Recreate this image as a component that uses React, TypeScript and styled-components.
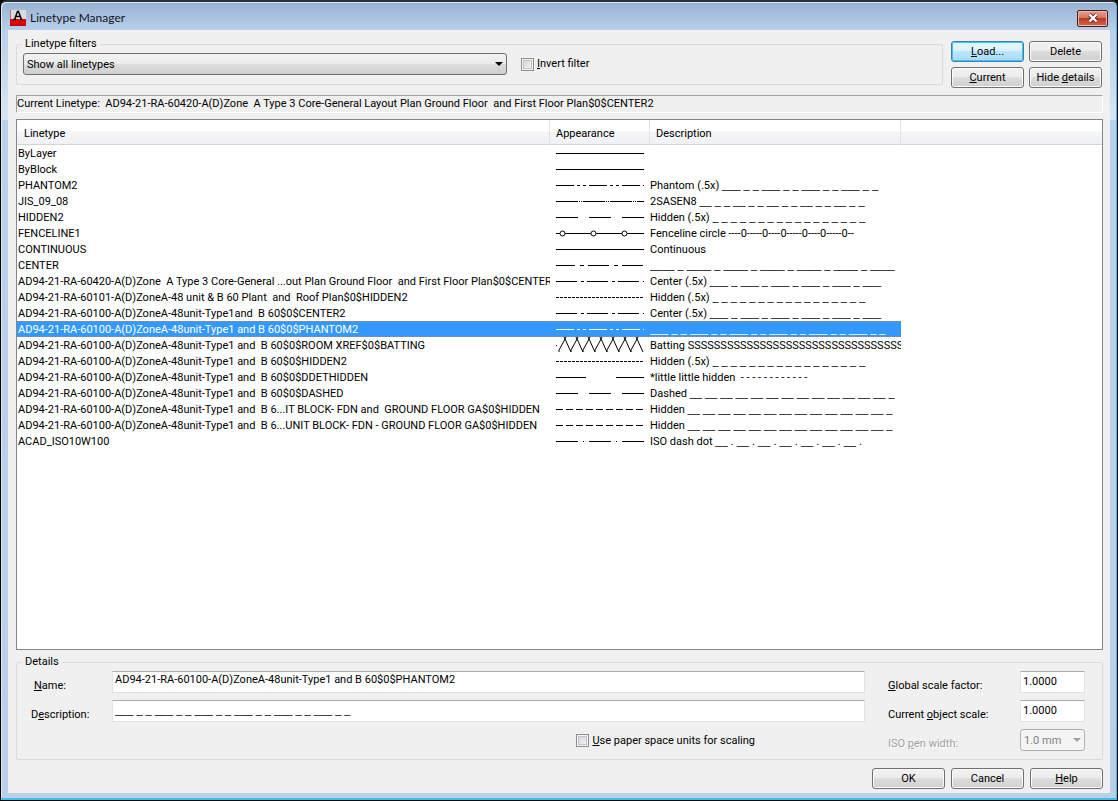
import React from 'react';
import styled, { createGlobalStyle, css } from 'styled-components';

const GlobalStyle = createGlobalStyle`
  * { box-sizing: border-box; }
  body { margin: 0; background: #000; }
  body, button, input, select, table {
    font-family: Roboto, "Liberation Sans", Arial, sans-serif;
    font-size: 11px;
    line-height: 16px;
    color: #000;
  }
`;

const Window = styled.main`
  display: flex;
  flex-direction: column;
  min-height: 100vh;
  padding: 0 6px 7px;
  border: 1px solid #000;
  border-top: 2px solid #2b2f38;
  border-radius: 6px 6px 0 0;
  box-shadow: inset -1px -2px 0 #35c3e8, inset 1px 1px 0 #dfeaf7;
  background: linear-gradient(#98b3d3 0, #b8cfe9 28px, #d9e5f5 118px, #b9d1ea 118px, #bccfe8 100%);
`;

const TitleBar = styled.header`
  display: flex;
  align-items: center;
  height: 28px;
  padding: 4px 3px 0;
`;

const Title = styled.h1`
  flex: 1;
  margin: 0 0 0 4px;
  font: 12px/16px Lato, "Open Sans", sans-serif;
  color: #10151d;
`;

const CloseButton = styled.button`
  display: flex;
  align-items: center;
  justify-content: center;
  width: 31px;
  height: 17px;
  padding: 0;
  border: 1px solid #4c1a1d;
  border-radius: 2px;
  box-shadow: inset 0 0 0 1px #eab5ab;
  background: linear-gradient(#e8a193 0, #d4705f 50%, #bb3922 50%, #d06a50 100%);
`;

const Client = styled.div`
  display: flex;
  flex: 1;
  flex-direction: column;
  margin: 0 1px;
  padding: 6px 7px 4px 8px;
  background: #f0f0f0;
`;

const TopRow = styled.div`
  display: flex;
  gap: 8px;
  padding-right: 1px;
`;

const Group = styled.fieldset`
  min-width: 0;
  margin: 0;
  padding: 0;
  border: 1px solid #d8dadc;
  border-radius: 2px;
`;

const Legend = styled.legend`
  margin-left: 5px;
  padding: 0 3px;
  line-height: 10px;
`;

const FilterGroup = styled(Group)`
  flex: 1;
  height: 46px;
  margin-top: 3px;
`;

const FilterRow = styled.div`
  display: flex;
  align-items: center;
  gap: 14px;
  padding: 4px 6px 0;
`;

const SelectBox = styled.div<{ $disabled?: boolean; $wide?: boolean }>`
  position: relative;
  ${p => p.$wide && css`flex: 0 1 484px;`}
  &::after {
    content: "";
    position: absolute;
    top: 9px;
    right: 4px;
    border: 4px solid transparent;
    border-top-color: ${p => (p.$disabled ? '#a0a0a0' : '#000')};
    border-bottom-width: 0;
    pointer-events: none;
  }
`;

const Select = styled.select`
  appearance: none;
  display: block;
  width: 100%;
  height: 22px;
  padding: 2px 12px 0 3px;
  border: 1px solid #707070;
  border-radius: 3px;
  background: linear-gradient(#f2f2f2 0, #ebebeb 50%, #dddddd 50%, #cfcfcf 100%);
  &:disabled {
    opacity: 1;
    color: #838383;
    border-color: #adb2b5;
    background: #f4f4f4;
  }
`;

const CheckLabel = styled.label`
  display: flex;
  align-items: center;
  gap: 3px;
`;

const Checkbox = styled.input`
  appearance: none;
  width: 13px;
  height: 13px;
  margin: 0;
  border: 1px solid #8e8f8f;
  box-shadow: inset 0 0 0 1px #f4f4f4, inset 0 0 0 2px #c0c4c8;
  background: linear-gradient(135deg, #cfd3d8, #f6f6f6);
`;

const ButtonGrid = styled.div`
  display: grid;
  grid-template-columns: 73px 73px;
  gap: 5px;
  align-content: start;
  padding-top: 5px;
`;

const Button = styled.button<{ $focused?: boolean }>`
  width: 73px;
  height: 21px;
  padding: 1px 0 0;
  border: 1px solid #707070;
  border-radius: 3px;
  box-shadow: inset 0 0 0 1px #fbfbfb;
  background: linear-gradient(#f2f2f2 0, #ebebeb 50%, #dddddd 50%, #cfcfcf 100%);
  ${p => p.$focused && css`
    border-color: #3c7fb1;
    box-shadow: inset 0 0 0 1px #3fc4f0;
    background: linear-gradient(#eaf6fd 0, #d9f0fc 50%, #bee6fd 50%, #a7d9f5 100%);
  `}
`;

const CurrentBar = styled.div`
  height: 18px;
  margin-top: 7px;
  border: 1px solid #a0a0a0;
  border-right-color: #fff;
  border-bottom-color: #fff;
  white-space: pre;
  overflow: hidden;
`;

const ListFrame = styled.section`
  flex: 1;
  margin-top: 6px;
  border: 1px solid #828790;
  background: #fff;
  overflow: hidden;
`;

const ListTable = styled.table`
  width: 100%;
  table-layout: fixed;
  border-collapse: separate;
  border-spacing: 0;
`;

const Col = styled.col<{ $w?: number }>`
  ${p => p.$w && css`width: ${p.$w}px;`}
`;

const HeadCell = styled.th`
  height: 25px;
  padding: 3px 6px 0;
  border-bottom: 1px solid #d5d5d5;
  border-right: 1px solid #dfe1e4;
  background: linear-gradient(#fff 0, #fff 45%, #f4f5f7 50%, #f0f1f3 100%);
  font-weight: normal;
  text-align: left;
  &:first-child { padding-left: 7px; }
  &:last-child { border-right: 0; }
`;

const Cell = styled.td`
  height: 16px;
  padding: 0;
  white-space: pre;
  overflow: hidden;
  &:first-child { padding-left: 1px; }
`;

const CellText = styled.span`
  display: block;
  padding-top: 2px;
  line-height: 14px;
`;

const Row = styled.tr<{ $selected?: boolean }>`
  ${p => p.$selected && css`
    color: #fff;
    ${Cell}:not(:last-child) {
      background: #3399ff;
      box-shadow: inset 0 1px 0 #6f8fb4, inset 0 -1px 0 #6f8fb4;
    }
  `}
`;

const dashFont = '"Liberation Sans", Arial, sans-serif';

const Dashes = styled.span`
  font-family: ${dashFont};
  line-height: 10px;
`;

const Sample = styled.svg`
  display: block;
  margin-left: 6px;
`;

const DetailsGroup = styled(Group)`
  margin-top: 7px;
`;

const DetailsGrid = styled.div`
  display: grid;
  grid-template-columns: 81px minmax(0, 1fr) 23px 132px 65px;
  grid-auto-rows: 29px;
  align-items: center;
  padding: 0 17px 5px 14px;
`;

const FieldLabel = styled.label<{ $indent?: boolean; $disabled?: boolean; $column?: number }>`
  padding: 9px 0 0 ${p => (p.$indent ? 3 : 0)}px;
  ${p => p.$column && css`grid-column: ${p.$column};`}
  ${p => p.$disabled && css`
    color: #a0a0a0;
    text-shadow: 1px 1px 0 #fff;
  `}
`;

const TextInput = styled.input<{ $raised?: boolean; $dashes?: boolean }>`
  width: 100%;
  height: 22px;
  padding: 0 2px ${p => (p.$raised ? 5 : 1)}px;
  border: 1px solid #e2e3ea;
  border-top-color: #abadb3;
  background: #fff;
  outline: 0;
  ${p => p.$dashes && css`font-family: ${dashFont};`}
`;

const PaperSpace = styled.div`
  display: flex;
  grid-column: 2;
  justify-content: flex-end;
  padding: 2px 110px 0 0;
`;

const Footer = styled.footer`
  display: flex;
  justify-content: flex-end;
  gap: 6px;
  margin-top: 8px;
`;

type Kind =
  | 'solid' | 'phantom' | 'jis' | 'long' | 'fence' | 'center' | 'center2'
  | 'fine' | 'batting' | 'wide' | 'hidden' | 'iso';

const dashes: Partial<Record<Kind, string>> = {
  phantom: '18 3 3 3 3 3',
  jis: '22 1 1 1 1 1',
  long: '22 11',
  center: '21 5 4 4',
  center2: '21 4 3 3',
  fine: '3 1',
  wide: '30 30',
  hidden: '7 3',
  iso: '22 5 1 5',
};

const battingPath = () => {
  let d = 'M3 15';
  for (let i = 0; i < 7; i++) {
    const x = 3 + i * 12;
    d += `V13L${x + 5} 4L${x + 7} 0M${x + 5} 0L${x + 7} 4L${x + 11} 13L${x + 12} 15`;
  }
  return d;
};

function Appearance({ kind }: { kind: Kind }) {
  return (
    <Sample width="88" height="16" viewBox="0 0 88 16" fill="none" stroke="currentColor" shapeRendering="crispEdges" aria-hidden="true">
      {kind === 'batting' && <path d={`M0 8.5H1${battingPath()}`} shapeRendering="auto" />}
      {kind === 'fence' && (
        <>
          <path d="M0 8.5H4M9 8.5H35M40 8.5H66M71 8.5H88" />
          {[6.5, 37.5, 68.5].map(x => (
            <circle key={x} cx={x} cy="8.5" r="2.5" shapeRendering="auto" />
          ))}
        </>
      )}
      {kind !== 'batting' && kind !== 'fence' && (
        <path d="M0 8.5H88" strokeDasharray={dashes[kind]} strokeDashoffset={kind === 'center' ? 2 : 0} />
      )}
    </Sample>
  );
}

const phantomLine = Array(6).fill('___ _ _').join(' ');
const hidden2 = Array(17).fill('_').join(' ');
const center2 = '___ _ '.repeat(5) + '___';
const dashedLine = '__ '.repeat(13) + '_';
const zone = 'AD94-21-RA-60100-A(D)ZoneA-48unit-Type1 and  B 6';
const selectedName = 'AD94-21-RA-60100-A(D)ZoneA-48unit-Type1 and B 60$0$PHANTOM2';

const rows: { name: string; kind: Kind; text?: string; line?: string }[] = [
  { name: 'ByLayer', kind: 'solid' },
  { name: 'ByBlock', kind: 'solid' },
  { name: 'PHANTOM2', kind: 'phantom', text: 'Phantom (.5x) ', line: Array(4).fill('___ _ _').join(' ') },
  { name: 'JIS_09_08', kind: 'jis', text: '2SASEN8 ', line: Array(5).fill('__ _ _').join(' ') },
  { name: 'HIDDEN2', kind: 'long', text: 'Hidden (.5x) ', line: hidden2 },
  { name: 'FENCELINE1', kind: 'fence', text: 'Fenceline circle ----0-----0----0-----0----0-----0--' },
  { name: 'CONTINUOUS', kind: 'solid', text: 'Continuous' },
  { name: 'CENTER', kind: 'center', line: '____ _ '.repeat(6) + '____' },
  { name: 'AD94-21-RA-60420-A(D)Zone  A Type 3 Core-General ...out Plan Ground Floor  and First Floor Plan$0$CENTER2', kind: 'center2', text: 'Center (.5x) ', line: center2 },
  { name: 'AD94-21-RA-60101-A(D)ZoneA-48 unit & B 60 Plant  and  Roof Plan$0$HIDDEN2', kind: 'fine', text: 'Hidden (.5x) ', line: hidden2 },
  { name: 'AD94-21-RA-60100-A(D)ZoneA-48unit-Type1and  B 60$0$CENTER2', kind: 'center2', text: 'Center (.5x) ', line: center2 },
  { name: selectedName, kind: 'phantom', line: phantomLine },
  { name: zone + '0$0$ROOM XREF$0$BATTING', kind: 'batting', text: 'Batting ' + 'S'.repeat(33) },
  { name: zone + '0$0$HIDDEN2', kind: 'fine', text: 'Hidden (.5x) ', line: hidden2 },
  { name: zone + '0$0$DDETHIDDEN', kind: 'wide', text: '*little little hidden  ' + Array(12).fill('-').join(' ') },
  { name: zone + '0$0$DASHED', kind: 'long', text: 'Dashed ', line: dashedLine },
  { name: zone + '...IT BLOCK- FDN and  GROUND FLOOR GA$0$HIDDEN', kind: 'hidden', text: 'Hidden ', line: dashedLine },
  { name: zone + '...UNIT BLOCK- FDN - GROUND FLOOR GA$0$HIDDEN', kind: 'hidden', text: 'Hidden ', line: dashedLine },
  { name: 'ACAD_ISO10W100', kind: 'iso', text: 'ISO dash dot ', line: Array(7).fill('__ .').join(' ') },
];

export default function App() {
  return (
    <>
      <GlobalStyle />
      <Window>
        <TitleBar>
          <svg width="16" height="16" viewBox="0 0 16 16" aria-hidden="true">
            <rect width="16" height="16" fill="#d9dcd8" />
            <rect y="9" width="16" height="7" fill="#e00008" />
            <path d="M4.5 9.500L7.500 1.500H8.500L11.500 9.500M6 6.500H10M3.500 9.500H6M10 9.500H12.500" fill="none" stroke="#000" strokeWidth="1.400" />
            <path d="M0 15.500H16M.5 0V16" stroke="#8b1216" strokeOpacity=".5" />
          </svg>
          <Title>Linetype Manager</Title>
          <CloseButton aria-label="Close">
            <svg width="12" height="10" viewBox="0 0 12 10" aria-hidden="true">
              <path d="M2.500 1.500L9.500 8.500M9.500 1.500L2.500 8.500" stroke="#5c2a2a" strokeWidth="4" />
              <path d="M2.500 1.500L9.500 8.500M9.500 1.500L2.500 8.500" stroke="#fff" strokeWidth="2.400" />
            </svg>
          </CloseButton>
        </TitleBar>

        <Client>
          <TopRow>
            <FilterGroup>
              <Legend>Linetype filters</Legend>
              <FilterRow>
                <SelectBox $wide>
                  <Select aria-label="Linetype filters">
                    <option>Show all linetypes</option>
                  </Select>
                </SelectBox>
                <CheckLabel>
                  <Checkbox type="checkbox" />
                  <span><u>I</u>nvert filter</span>
                </CheckLabel>
              </FilterRow>
            </FilterGroup>
            <ButtonGrid>
              <Button $focused><u>L</u>oad...</Button>
              <Button>Delete</Button>
              <Button><u>C</u>urrent</Button>
              <Button>Hide <u>d</u>etails</Button>
            </ButtonGrid>
          </TopRow>

          <CurrentBar>
            {'Current Linetype:  AD94-21-RA-60420-A(D)Zone  A Type 3 Core-General Layout Plan Ground Floor  and First Floor Plan$0$CENTER2'}
          </CurrentBar>

          <ListFrame>
            <ListTable>
              <colgroup>
                <Col $w={533} />
                <Col $w={100} />
                <Col $w={251} />
                <Col />
              </colgroup>
              <thead>
                <tr>
                  <HeadCell>Linetype</HeadCell>
                  <HeadCell>Appearance</HeadCell>
                  <HeadCell>Description</HeadCell>
                  <HeadCell />
                </tr>
              </thead>
              <tbody>
                {rows.map((row, i) => (
                  <Row key={i} $selected={row.name === selectedName}>
                    <Cell><CellText>{row.name}</CellText></Cell>
                    <Cell><Appearance kind={row.kind} /></Cell>
                    <Cell>
                      <CellText>
                        {row.text}
                        {row.line && <Dashes>{row.line}</Dashes>}
                      </CellText>
                    </Cell>
                    <Cell />
                  </Row>
                ))}
              </tbody>
            </ListTable>
          </ListFrame>

          <DetailsGroup>
            <Legend>Details</Legend>
            <DetailsGrid>
              <FieldLabel htmlFor="name" $indent><u>N</u>ame:</FieldLabel>
              <TextInput id="name" $raised defaultValue={selectedName} />
              <FieldLabel htmlFor="global" $column={4}><u>G</u>lobal scale factor:</FieldLabel>
              <TextInput id="global" defaultValue="1.0000" />

              <FieldLabel htmlFor="description">D<u>e</u>scription:</FieldLabel>
              <TextInput id="description" $dashes defaultValue={phantomLine} />
              <FieldLabel htmlFor="object" $column={4}>Current <u>o</u>bject scale:</FieldLabel>
              <TextInput id="object" defaultValue="1.0000" />

              <PaperSpace>
                <CheckLabel>
                  <Checkbox type="checkbox" />
                  <span><u>U</u>se paper space units for scaling</span>
                </CheckLabel>
              </PaperSpace>
              <FieldLabel htmlFor="pen" $column={4} $disabled>ISO <u>p</u>en width:</FieldLabel>
              <SelectBox $disabled>
                <Select id="pen" disabled>
                  <option>1.0 mm</option>
                </Select>
              </SelectBox>
            </DetailsGrid>
          </DetailsGroup>

          <Footer>
            <Button>OK</Button>
            <Button>Cancel</Button>
            <Button><u>H</u>elp</Button>
          </Footer>
        </Client>
      </Window>
    </>
  );
}
